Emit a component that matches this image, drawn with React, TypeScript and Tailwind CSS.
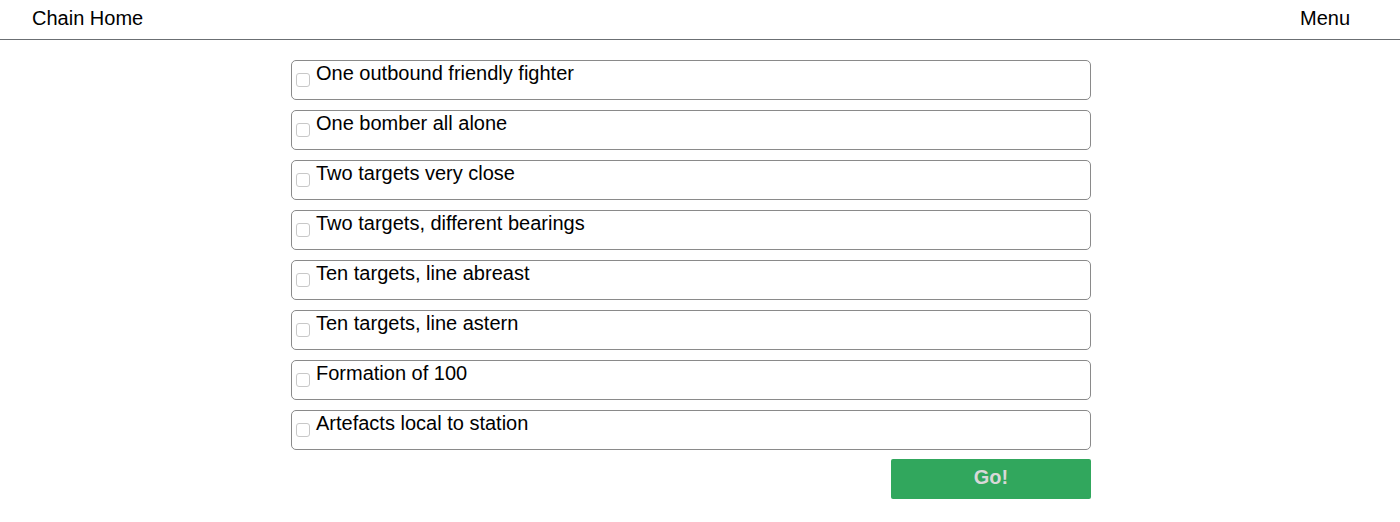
const scenarios = [
  "One outbound friendly fighter",
  "One bomber all alone",
  "Two targets very close",
  "Two targets, different bearings",
  "Ten targets, line abreast",
  "Ten targets, line astern",
  "Formation of 100",
  "Artefacts local to station",
];

export default function App() {
  return (
    <div className="min-h-screen bg-white text-black" style={{ fontFamily: '"Liberation Sans", Arial, sans-serif' }}>
      {/* header */}
      <div className="flex h-10 items-center justify-between border-b border-[#6b6f73] px-8 text-[20px]">
        <span className="-mt-[3px]">Chain Home</span>
        <span className="-mt-[3px] mr-[18px]">Menu</span>
      </div>

      {/* scenario list */}
      <div className="ml-[291px] mt-5 flex w-[800px] flex-col gap-[10px]">
        {scenarios.map((s) => (
          <label key={s} className="flex h-10 items-start rounded-[5px] border border-[#8a8a8a] pt-[1px] text-[20px] leading-[22px]">
            <span className="ml-[4px] mr-[6px] mt-[11px] h-[14px] w-[14px] shrink-0 rounded-[3px] border border-[#c8c8c8] bg-white" />
            <span>{s}</span>
          </label>
        ))}
        <div className="-mt-[1px] flex justify-end">
          <button className="h-10 w-[200px] rounded-[2px] bg-[#31a75d] pb-[4px] text-[20px] font-bold text-[#d8d8d8]">Go!</button>
        </div>
      </div>
    </div>
  );
}
